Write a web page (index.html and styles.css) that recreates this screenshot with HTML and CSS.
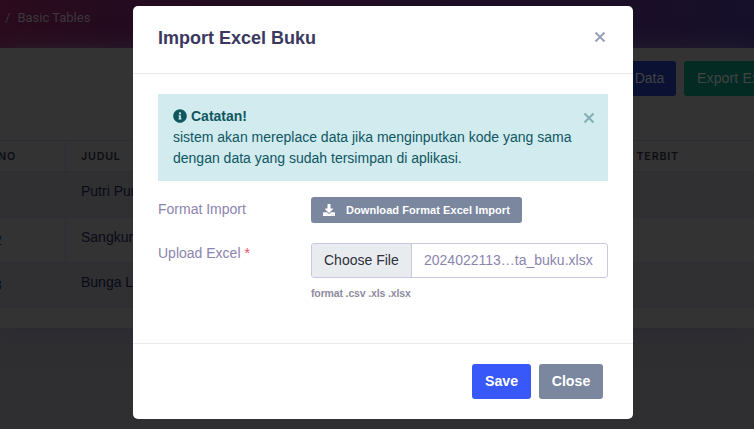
FILE: index.html
```html
<!DOCTYPE html>
<html lang="id">
<head>
<meta charset="utf-8">
<title>Import Excel Buku</title>
<link rel="stylesheet" href="styles.css">
</head>
<body>
<div class="page">
  <header class="hero"><span>/</span><span>Basic Tables</span></header>
  <main class="card">
    <div class="toolbar">
      <button class="tool add">Tambah Data</button>
      <button class="tool export">Export Excel</button>
    </div>
    <div class="table">
      <div class="row head"><span class="cell no">NO</span><span class="cell">JUDUL</span><span class="cell last">TERBIT</span></div>
      <div class="row striped"><span class="cell no"></span><span class="cell">Putri Puri</span><span class="cell last"></span></div>
      <div class="row"><span class="cell no">2</span><span class="cell">Sangkuriang</span><span class="cell last"></span></div>
      <div class="row striped"><span class="cell no">3</span><span class="cell">Bunga Lily</span><span class="cell last"></span></div>
    </div>
  </main>
</div>
<section class="modal" role="dialog">
  <header class="modal-header">
    <h1>Import Excel Buku</h1>
    <svg class="close" viewBox="0 0 12 12"><path d="M1.5 1.5l9 9m0-9l-9 9"/></svg>
  </header>
  <div class="modal-body">
    <div class="alert">
      <svg class="close" viewBox="0 0 12 12"><path d="M1.5 1.5l9 9m0-9l-9 9"/></svg>
      <div class="note"><svg class="info" viewBox="0 0 512 512"><path d="M256 8C119 8 8 119 8 256s111 248 248 248 248-111 248-248S393 8 256 8zm0 110a42 42 0 1 1 0 84 42 42 0 0 1 0-84zm56 254a12 12 0 0 1-12 12h-88a12 12 0 0 1-12-12v-24a12 12 0 0 1 12-12h12v-64h-12a12 12 0 0 1-12-12v-24a12 12 0 0 1 12-12h64a12 12 0 0 1 12 12v100h12a12 12 0 0 1 12 12z"/></svg><b>Catatan!</b></div>
      <p>sistem akan mereplace data jika menginputkan kode yang sama<br>dengan data yang sudah tersimpan di aplikasi.</p>
    </div>
    <div class="field">
      <span class="label">Format Import</span>
      <button class="download"><svg viewBox="0 0 512 512"><path d="M216 0h80c13 0 24 11 24 24v168h88c18 0 27 22 14 34L270 378c-8 8-20 8-28 0L90 226c-13-12-4-34 14-34h88V24c0-13 11-24 24-24zm296 376v112c0 13-11 24-24 24H24c-13 0-24-11-24-24V376c0-13 11-24 24-24h147l49 49c20 20 52 20 72 0l49-49h147c13 0 24 11 24 24zM388 464a20 20 0 1 0-40 0 20 20 0 0 0 40 0zm64 0a20 20 0 1 0-40 0 20 20 0 0 0 40 0z"/></svg>Download Format Excel Import</button>
    </div>
    <div class="field upload">
      <span class="label">Upload Excel <i>*</i></span>
      <div>
        <div class="file"><span class="choose">Choose File</span><span class="filename">2024022113…ta_buku.xlsx</span></div>
        <small>format .csv .xls .xlsx</small>
      </div>
    </div>
  </div>
  <footer class="modal-footer"><button class="save">Save</button><button class="dismiss">Close</button></footer>
</section>
</body>
</html>
```
FILE: styles.css
```css
* { box-sizing: border-box; }
body { margin: 0; font-family: "Liberation Sans", Arial, sans-serif; font-size: 14px; line-height: 21px; }
button { border: 0; font-family: inherit; white-space: nowrap; }
.page { width: 754px; height: 429px; overflow: hidden; background: #2f2f31; }
.hero { height: 48px; padding: 8px 0 0 5px; display: flex; gap: 7px; font-family: Roboto, sans-serif; font-size: 13px; line-height: 20px; color: #3b383b; background: linear-gradient(90deg, #2b0b1d, #240b20 18%, #1b0e26 80%, #16102a); }
.card { height: 280px; background: #333; box-shadow: 0 4px 24px #2a2933; }
.toolbar { height: 92px; padding-top: 13px; display: flex; gap: 8px; margin-left: 568px; }
.tool { flex: none; height: 35px; padding: 0 13px 1px; border-radius: 3px; font-size: 14px; color: #434343; text-align: right; }
.add { width: 108px; background: #0b1133; }
.export { background: #032b23; letter-spacing: .15px; }
.table { font-size: 14px; color: #090a17; }
.row { display: grid; grid-template-columns: 66px 556px 1fr; height: 45px; border-top: 1px solid #2d2d35; }
.row:last-child { height: 46px; border-bottom: 1px solid #2d2d35; }
.row.striped { background: #303032; }
.row:nth-child(2) { height: 46px; }
.row.head { height: 31px; font-family: Inter, sans-serif; font-size: 10.7px; font-weight: 600; letter-spacing: .8px; color: #0d0d12; }
.cell { padding: 9px 15px 0; }
.head .cell { padding-top: 5px; }
.no { border-right: 1px solid #2d2d35; padding-left: 0; text-indent: -6px; padding-top: 12px; color: #07101f; }
.head .no { text-indent: -2px; color: inherit; }
.head .last { padding-left: 14.5px; }
.modal { position: absolute; left: 133px; top: 6px; width: 500px; height: 413px; background: #fff; border-radius: 5px; display: flex; flex-direction: column; }
.modal-header { height: 68px; padding: 0 27px 6px 25px; display: flex; align-items: center; justify-content: space-between; border-bottom: 1px solid #ebebed; }
h1 { margin: 3px 0 0; font-size: 18px; line-height: 24px; color: #3b3860; }
.close { width: 12px; height: 12px; fill: none; stroke: #99a1b8; stroke-width: 2; }
.modal-body { flex: 1; padding: 20px 25px; }
.alert { height: 87px; padding: 12px 15px; background: #d1ebef; color: #10565f; position: relative; font-size: 14px; }
.alert .close { position: absolute; right: 13px; top: 18px; stroke: #83aeb6; }
.note { display: flex; align-items: center; gap: 4px; }
.info { width: 14px; height: 14px; margin-top: -1px; fill: currentColor; }
.alert p { margin: 0; white-space: nowrap; }
.field { display: grid; grid-template-columns: 153px 1fr; color: #8c84ae; font-size: 14px; margin-top: 16px; }
.label { padding-top: 2px; }
.label i { color: #ef5064; font-style: normal; }
.download { width: 211px; height: 26px; padding: 0 12px; display: flex; align-items: center; background: #7a879f; color: #fff; border-radius: 3px; font-size: 11px; font-weight: 700; letter-spacing: .07px; }
.download svg { width: 12px; height: 12px; margin-right: 11px; fill: #fff; }
.upload { margin-top: 20px; }
.upload .label { padding-top: 0; }
.file { height: 35px; display: flex; border: 1px solid #cac7e2; border-radius: 3px; overflow: hidden; line-height: 33px; }
.choose { width: 100px; padding-left: 12px; background: #e9ecef; color: #2c303a; border-right: 1px solid #cac7e2; white-space: nowrap; }
.filename { padding-left: 12px; }
small { display: block; margin-top: 5px; font-size: 10.5px; font-weight: 700; letter-spacing: -.14px; color: #8e8b9f; }
.modal-footer { height: 76px; border-top: 1px solid #ebebed; padding: 20px 30px 0; display: flex; justify-content: flex-end; gap: 8px; }
.modal-footer button { height: 35px; padding: 0 0 1px; border-radius: 3px; color: #fff; font-size: 14.2px; font-weight: 700; }
.save { width: 59px; background: #3858f9; }
.dismiss { width: 64px; background: #7a879f; }
```
